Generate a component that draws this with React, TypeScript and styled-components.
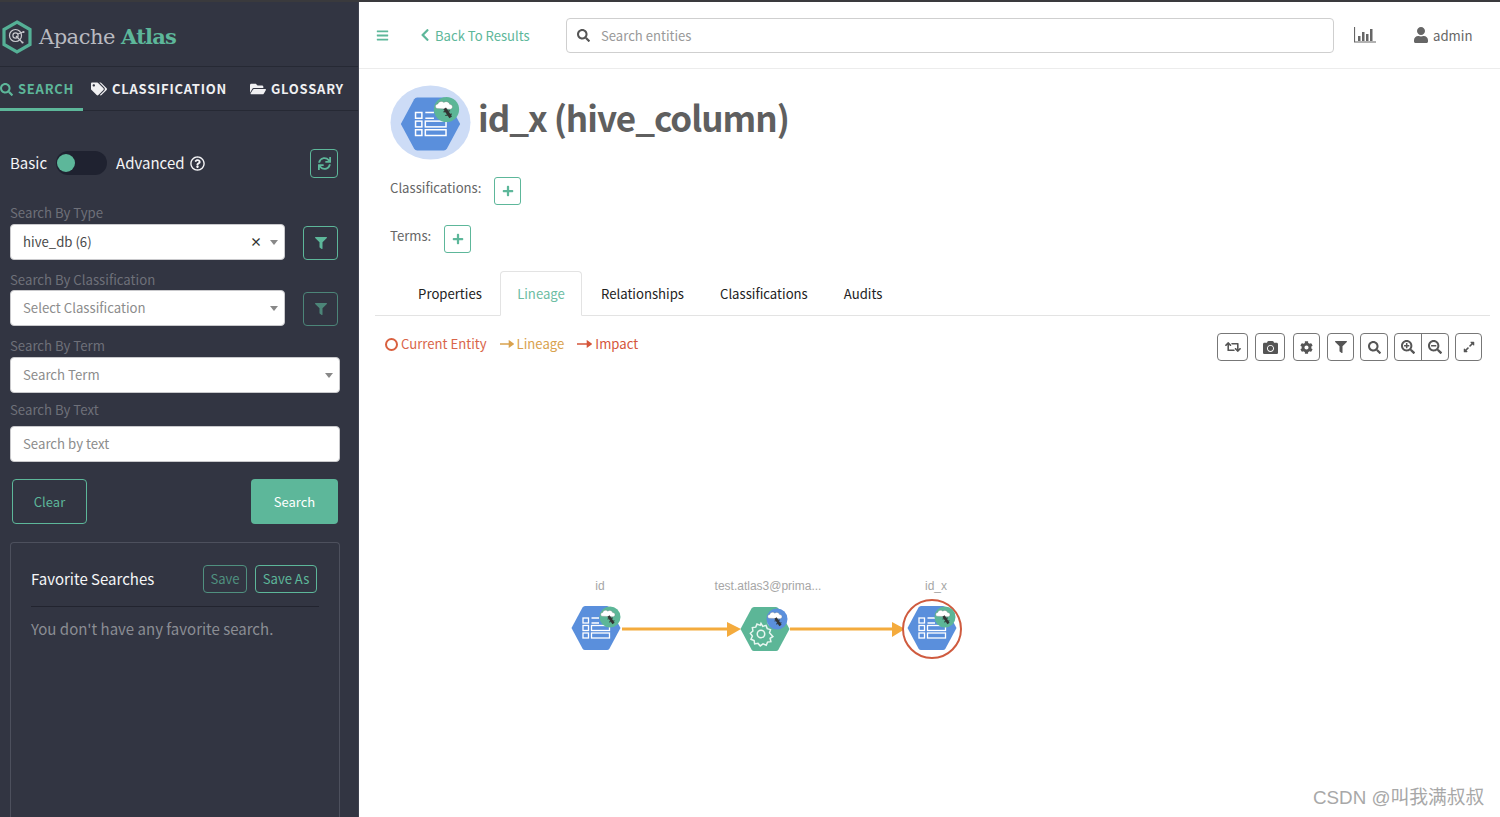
import React from "react";
import styled, { createGlobalStyle } from "styled-components";
import {
  FaBars, FaCamera, FaChevronLeft, FaCog, FaExpandAlt, FaFilter, FaFolderOpen, FaPlus,
  FaRegQuestionCircle, FaRetweet, FaSearch, FaSearchMinus, FaSearchPlus, FaSync, FaTags, FaUser,
} from "react-icons/fa";

const SANS = `"Noto Sans CJK SC", "Noto Sans", sans-serif`;
const TEAL = "#5db79a";

const Global = createGlobalStyle`
  html, body { margin: 0; padding: 0; height: 100%; overflow: hidden; background: #fff; }
  body { font-family: ${SANS}; }
  * { box-sizing: border-box; }
`;

const Page = styled.div`
  position: relative; width: 1500px; height: 817px; display: flex; overflow: hidden;
  border-top: 2px solid #3a3a3d; background: #fff;
`;
const Sidebar = styled.aside`
  width: 359px; flex: none; background: #323542; border-right: 1px solid #3f424f;
  display: flex; flex-direction: column; height: 815px; overflow: hidden;
`;
const Brand = styled.div`
  height: 65px; display: flex; align-items: center; gap: 7px; padding: 5px 0 0 2px;
  border-bottom: 1px solid #262934; flex: none;
`;
const BrandText = styled.div`
  font-family: "DejaVu Serif", serif; font-size: 21px; color: #b9bac0; letter-spacing: -0.5px; white-space: nowrap;
  span { color: ${TEAL}; font-weight: 700; letter-spacing: -0.8px; }
`;
const TabBar = styled.nav`
  height: 44px; display: flex; border-bottom: 1px solid #262934; flex: none;
`;
const SideTab = styled.div<{ $active?: boolean; $w: number; $pl: number }>`
  width: ${(p) => p.$w}px; padding-left: ${(p) => p.$pl}px; height: 44px; display: flex; align-items: center; gap: 5px;
  font-size: 13px; font-weight: 700; letter-spacing: 0.75px; white-space: nowrap; line-height: 18px;
  color: ${(p) => (p.$active ? TEAL : "#f0f0f2")};
  border-bottom: ${(p) => (p.$active ? `3px solid ${TEAL}` : "none")};
  padding-top: ${(p) => (p.$active ? 3 : 0)}px;
  svg { flex: none; }
`;
const SideBody = styled.div`
  padding: 37px 0 0 10px; display: flex; flex-direction: column; flex: 1; min-height: 0;
`;
const ModeRow = styled.div`
  height: 30px; width: 328px; display: flex; align-items: center; color: #f4f4f6; font-size: 15px; line-height: 22px;
`;
const Toggle = styled.div`
  width: 51px; height: 24px; border-radius: 12px; background: #1f2230; margin: 0 9px 0 9px; display: flex; align-items: center; padding-left: 1px;
`;
const Knob = styled.div`
  width: 18px; height: 18px; border-radius: 50%; background: ${TEAL};
`;
const HelpIcon = styled(FaRegQuestionCircle)`
  margin-left: 5px; margin-right: auto;
`;
const IconButton = styled.div<{ $w: number; $h: number; $dim?: boolean; $ml?: number }>`
  width: ${(p) => p.$w}px; height: ${(p) => p.$h}px; flex: none; display: flex; align-items: center; justify-content: center;
  margin-left: ${(p) => p.$ml ?? 0}px; border: 1px solid ${TEAL}; border-radius: 4px; color: ${TEAL};
  opacity: ${(p) => (p.$dim ? 0.62 : 1)};
`;
const Label = styled.div<{ $mt: number }>`
  font-size: 13.2px; line-height: 18px; color: #6e7079; margin-top: ${(p) => p.$mt}px; height: 18px; white-space: nowrap;
`;
const FieldRow = styled.div<{ $mt?: number }>`
  display: flex; align-items: flex-end; margin-top: ${(p) => p.$mt ?? 1}px;
`;
const SelectBox = styled.div<{ $w: number }>`
  position: relative; width: ${(p) => p.$w}px; height: 36px; background: #fff; border-radius: 4px; border: 1px solid #c9c9cc;
  padding-left: 12px; display: flex; align-items: center; font-size: 13.2px; line-height: 20px; color: #4a4a4a; flex: none;
`;
const Placeholder = styled.span`
  color: #8c8c8c;
`;
const Caret = styled.i`
  position: absolute; right: 6px; top: 15px; width: 0; height: 0;
  border-left: 4px solid transparent; border-right: 4px solid transparent; border-top: 5px solid #888;
`;
const Clear = styled.b`
  position: absolute; right: 22px; top: 7px; font-size: 12px; line-height: 20px; color: #333;
`;
const Actions = styled.div`
  display: flex; justify-content: space-between; width: 326px; margin: 17px 0 0 2px;
`;
const OutlineBtn = styled.div`
  width: 75px; height: 45px; border: 1px solid ${TEAL}; border-radius: 4px; color: ${TEAL};
  display: flex; align-items: center; justify-content: center; font-size: 13px;
`;
const SolidBtn = styled.div`
  width: 87px; height: 45px; border-radius: 4px; background: ${TEAL}; color: #fff;
  display: flex; align-items: center; justify-content: center; font-size: 13px;
`;
const FavPanel = styled.section`
  width: 330px; flex: 1; margin-top: 18px; border: 1px solid #4d505d; border-bottom: none; border-radius: 4px 4px 0 0; padding: 22px 20px 0 20px;
`;
const FavHead = styled.div`
  display: flex; align-items: center; height: 42px; padding-bottom: 14px; border-bottom: 1px solid #22242f;
`;
const FavTitle = styled.div`
  flex: 1; color: #f5f5f7; font-size: 15px; line-height: 22px; white-space: nowrap;
`;
const SmallBtn = styled.div<{ $w: number; $dim?: boolean; $mr: number }>`
  width: ${(p) => p.$w}px; height: 28px; margin-right: ${(p) => p.$mr}px; border: 1px solid ${TEAL}; border-radius: 4px; color: ${TEAL};
  display: flex; align-items: center; justify-content: center; font-size: 13.1px; white-space: nowrap;
  opacity: ${(p) => (p.$dim ? 0.7 : 1)};
`;
const FavEmpty = styled.div`
  margin-top: 11px; color: #8b8d94; font-size: 15px; line-height: 22px; white-space: nowrap;
`;

const Main = styled.main`
  flex: 1; display: flex; flex-direction: column; min-width: 0;
`;
const TopBar = styled.header`
  height: 67px; flex: none; display: flex; align-items: center; border-bottom: 1px solid #ececec; padding: 0 0 0 17px;
`;
const Burger = styled(FaBars)`
  color: ${TEAL}; flex: none;
`;
const BackLink = styled.div`
  margin-left: 29px; width: 148px; display: flex; align-items: center; gap: 3px; color: ${TEAL}; font-size: 13.1px; white-space: nowrap; flex: none;
`;
const SearchBar = styled.div`
  width: 768px; height: 35px; margin-top: 1px; border: 1px solid #cfcfcf; border-radius: 4px; display: flex; align-items: center; padding-left: 10px; gap: 11px;
  color: #999; font-size: 13.1px; flex: none;
`;
const DarkSearch = styled(FaSearch)`
  color: #555;
`;
const ChartIcon = styled.svg`
  margin-left: 20px; flex: none;
`;
const UserBox = styled.div`
  margin-left: 37px; display: flex; align-items: center; gap: 4px; color: #666; font-size: 13.2px; white-space: nowrap;
`;
const Content = styled.div`
  flex: 1; display: flex; flex-direction: column; padding: 16px 10px 0 16px; min-height: 0;
`;
const TitleRow = styled.div`
  display: flex; align-items: center; margin-left: 15px; height: 75px;
`;
const Title = styled.h1`
  margin: 0 0 6px 7px; font-size: 35px; line-height: 50px; font-weight: 600; color: #5f5f5f; white-space: nowrap; letter-spacing: -1px;
  transform: translateY(-3px);
`;
const MetaRow = styled.div<{ $mt: number }>`
  display: flex; align-items: center; gap: 13px; margin: ${(p) => p.$mt}px 0 0 15px; height: 28px; color: #666; font-size: 13.15px; line-height: 20px;
  span { margin-top: -6px; }
`;
const PlusBtn = styled.div`
  width: 27px; height: 28px; border: 1px solid ${TEAL}; border-radius: 3px; color: ${TEAL}; display: flex; align-items: center; justify-content: center;
`;
const TabStrip = styled.div`
  display: flex; height: 45px; margin-top: 18px; border-bottom: 1px solid #e3e3e3; padding-left: 126px; width: 1115px; flex: none; align-items: stretch;
`;
const MainTab = styled.div<{ $active?: boolean; $ml: number; $w?: number }>`
  position: relative; font-size: 13.15px; line-height: 20px; white-space: nowrap; margin-left: ${(p) => p.$ml}px;
  ${(p) => (p.$w ? `width:${p.$w}px;` : "")}
  color: ${(p) => (p.$active ? "#6dbda3" : "#222")}; display: flex; align-items: center; justify-content: center; padding-top: 1px;
  ${(p) => p.$active && `border: 1px solid #e3e3e3; border-bottom: 1px solid #fff; border-radius: 4px 4px 0 0; height: 45px;`}
`;
const FirstTab = styled(MainTab)`
  margin-left: -83px;
`;
const LegendBar = styled.div`
  display: flex; justify-content: space-between; align-items: flex-start; margin-top: 17px; height: 28px; padding: 0 8px 0 10px; flex: none;
`;
const Legend = styled.div`
  display: flex; align-items: center; font-size: 13.15px; line-height: 22px; height: 22px; white-space: nowrap;
`;
const LegendItem = styled.div<{ $c: string; $ml?: number }>`
  display: flex; align-items: center; gap: 3px; color: ${(p) => p.$c}; margin-left: ${(p) => p.$ml ?? 0}px;
`;
const Ring = styled.i`
  width: 13px; height: 13px; border: 2px solid #d9603f; border-radius: 50%; display: block;
`;
const Tools = styled.div`
  display: flex; align-items: center;
`;
const Tool = styled.div<{ $w: number; $ml: number }>`
  width: ${(p) => p.$w}px; height: 28px; margin-left: ${(p) => p.$ml}px; border: 1px solid #777; border-radius: 4px; color: #555;
  display: flex; align-items: center; justify-content: center;
`;
const ToolGroup = styled.div`
  display: flex; height: 28px; width: 55px; margin-left: 6px; border: 1px solid #777; border-radius: 4px; color: #555;
`;
const ToolPart = styled.div<{ $sep?: boolean }>`
  flex: 1; display: flex; align-items: center; justify-content: center; border-left: ${(p) => (p.$sep ? "1px solid #777" : "none")};
`;
const Canvas = styled.div`
  position: relative; flex: 1; min-height: 0;
`;
const GraphSvg = styled.svg`
  position: absolute; left: 0; top: 0; overflow: visible;
`;
const GraphLabel = styled.text`
  font-family: "Liberation Sans", sans-serif; font-size: 12px; fill: #a6a6a6; text-anchor: middle;
`;
const Watermark = styled.div`
  position: absolute; left: 1313px; top: 783px; font-family: "Liberation Sans", "Noto Sans CJK SC", sans-serif; font-size: 18.8px; line-height: 26px; color: #a8a8a8; white-space: nowrap;
`;

const Bee: React.FC = () => (
  <g>
    <path d="M-8 -.8c-1.8-.8-1.6-3.6.8-3.8.5-2.2 3.6-2.8 5-1.2 1.4-1.4 4.4-.8 4.8 1.4 2.4 0 3.6 3.4.7 4.2z" fill="#fff" stroke="#777" strokeWidth=".3" />
    <path d="M-1.5 -1L3.5 6.5" stroke="#333" strokeWidth="2.6" />
    <path d="M-2.5 2L3 1M-1 5L4.5 3.8" stroke="#333" strokeWidth=".9" />
  </g>
);
const Hex: React.FC<{ fill: string; s?: number }> = ({ fill, s = 1 }) => (
  <path
    transform={`scale(${s})`}
    d="M-24.5 0L-13.5 -20.5Q-12.6 -22 -11 -22H11Q12.6 -22 13.5 -20.5L24.5 0L13.5 20.5Q12.6 22 11 22H-11Q-12.6 22 -13.5 20.5Z"
    fill={fill}
  />
);
const ListGlyph: React.FC<{ s?: number }> = ({ s = 1 }) => (
  <g transform={`scale(${s})`} fill="none" stroke="#fff" strokeWidth="1.3">
    <rect x="-13" y="-10" width="5.5" height="5" />
    <rect x="-13" y="-2.5" width="5.5" height="5" />
    <rect x="-13" y="5" width="5.5" height="5" />
    <path d="M-4.5 -10H3M-4.5 -5H3" />
    <rect x="-4.5" y="-2.5" width="18" height="5" />
    <rect x="-4.5" y="5" width="18" height="5" />
  </g>
);
const GearGlyph: React.FC = () => (
  <g fill="none" stroke="#e8f6f0" strokeWidth="1.2" transform="translate(-4 5) scale(1.25) translate(3.5 -5)">
    <circle cx="-3.5" cy="5" r="3" />
    <path d="M-3.5 -3.5l1.4 2.4 2.6-.8 1 2.6 2.6.8-.8 2.6L6 7l-2.2 1.4.6 2.7-2.7.4-1 2.5-2.6-1.1-2.2 1.6-1.8-2-2.7.4-.4-2.7-2.5-1 1.1-2.6-1.6-2.2 2-1.8-.4-2.7 2.7-.4 1-2.5 2.6 1.1z" />
    <path d="M5 -1.5a3.2 3.2 0 1 1 2.5 -5.5" />
  </g>
);

const GraphNode: React.FC<{ x: number; y: number; color: string; badge: string; glyph: React.ReactNode; bx: number; by: number }> = ({ x, y, color, badge, glyph, bx, by }) => (
  <g transform={`translate(${x} ${y})`}>
    <Hex fill={color} />
    {glyph}
    <g transform={`translate(${bx} ${by})`}>
      <circle r="10.5" fill={badge} />
      <Bee />
    </g>
  </g>
);

const Logo: React.FC = () => (
  <svg width="30" height="34" viewBox="0 0 30 34">
    <path d="M15 2L28 9.5V24.5L15 32L2 24.5V9.5Z" fill="none" stroke="#55b096" strokeWidth="3.2" />
    <circle cx="13.5" cy="15.5" r="6" fill="none" stroke="#c9cacf" strokeWidth="1.2" />
    <circle cx="13.5" cy="15.5" r="2.6" fill="none" stroke="#c9cacf" strokeWidth="1.2" />
    <path d="M14 16l6 6M16 14l5-2" stroke="#c9cacf" strokeWidth="1.2" />
    <circle cx="21.5" cy="12" r="1.1" fill="#c9cacf" />
    <circle cx="20.5" cy="22.5" r="1.1" fill="#c9cacf" />
  </svg>
);

export default function App() {
  return (
    <Page>
      <Global />
      <Sidebar>
        <Brand>
          <Logo />
          <BrandText>Apache <span>Atlas</span></BrandText>
        </Brand>
        <TabBar>
          <SideTab $active $w={83} $pl={0}><FaSearch size={13} />SEARCH</SideTab>
          <SideTab $w={167} $pl={8}><FaTags size={16} />CLASSIFICATION</SideTab>
          <SideTab $w={108} $pl={0}><FaFolderOpen size={16} />GLOSSARY</SideTab>
        </TabBar>
        <SideBody>
          <ModeRow>
            Basic
            <Toggle><Knob /></Toggle>
            Advanced
            <HelpIcon size={15} />
            <IconButton $w={28} $h={29}><FaSync size={13} /></IconButton>
          </ModeRow>
          <Label $mt={26}>Search By Type</Label>
          <FieldRow $mt={2}>
            <SelectBox $w={275}>hive_db (6)<Clear>×</Clear><Caret /></SelectBox>
            <IconButton $w={35} $h={34} $ml={18}><FaFilter size={12} /></IconButton>
          </FieldRow>
          <Label $mt={11}>Search By Classification</Label>
          <FieldRow>
            <SelectBox $w={275}><Placeholder>Select Classification</Placeholder><Caret /></SelectBox>
            <IconButton $w={35} $h={34} $ml={18} $dim><FaFilter size={12} /></IconButton>
          </FieldRow>
          <Label $mt={11}>Search By Term</Label>
          <FieldRow $mt={2}>
            <SelectBox $w={330}><Placeholder>Search Term</Placeholder><Caret /></SelectBox>
          </FieldRow>
          <Label $mt={8}>Search By Text</Label>
          <FieldRow $mt={7}>
            <SelectBox $w={330}><Placeholder>Search by text</Placeholder></SelectBox>
          </FieldRow>
          <Actions>
            <OutlineBtn>Clear</OutlineBtn>
            <SolidBtn>Search</SolidBtn>
          </Actions>
          <FavPanel>
            <FavHead>
              <FavTitle>Favorite Searches</FavTitle>
              <SmallBtn $w={44} $mr={8} $dim>Save</SmallBtn>
              <SmallBtn $w={62} $mr={2}>Save As</SmallBtn>
            </FavHead>
            <FavEmpty>You don't have any favorite search.</FavEmpty>
          </FavPanel>
        </SideBody>
      </Sidebar>
      <Main>
        <TopBar>
          <Burger size={13} />
          <BackLink><FaChevronLeft size={14} />Back To Results</BackLink>
          <SearchBar><DarkSearch size={13} />Search entities</SearchBar>
          <ChartIcon width="22" height="16" viewBox="0 0 22 16">
            <path d="M.5 0V15H22" fill="none" stroke="#666" strokeWidth="1.2" />
            <path d="M4 9h2.5v5H4zM8 5h2.5v9H8zM12 7h2.5v7H12zM16 2h2.5v12H16z" fill="#666" />
          </ChartIcon>
          <UserBox><FaUser size={16} />admin</UserBox>
        </TopBar>
        <Content>
          <TitleRow>
            <svg width="81" height="75" viewBox="0 0 81 75">
              <ellipse cx="40.5" cy="37.5" rx="40" ry="37" fill="#cddcf6" />
              <g transform="translate(40.5 39)">
                <Hex fill="#5a8fdc" s={1.21} />
                <ListGlyph s={1.15} />
                <g transform="translate(16 -14.5) scale(1.2)">
                  <circle r="10.5" fill="#5cb697" />
                  <Bee />
                </g>
              </g>
            </svg>
            <Title>id_x (hive_column)</Title>
          </TitleRow>
          <MetaRow $mt={17}><span>Classifications:</span><PlusBtn><FaPlus size={12} /></PlusBtn></MetaRow>
          <MetaRow $mt={20}><span>Terms:</span><PlusBtn><FaPlus size={12} /></PlusBtn></MetaRow>
          <TabStrip>
            <FirstTab $ml={0} $w={64}>Properties</FirstTab>
            <MainTab $active $ml={18} $w={82}>Lineage</MainTab>
            <MainTab $ml={19}>Relationships</MainTab>
            <MainTab $ml={36}>Classifications</MainTab>
            <MainTab $ml={36}>Audits</MainTab>
          </TabStrip>
          <LegendBar>
            <Legend>
              <LegendItem $c="#d9654a"><Ring />Current Entity</LegendItem>
              <LegendItem $c="#d9a24e" $ml={13}>
                <svg width="14" height="8" viewBox="0 0 14 8"><path d="M0 4H12M9.5 1.5L13 4L9.5 6.5Z" stroke="#d9a24e" strokeWidth="1.6" fill="#d9a24e" /></svg>
                Lineage
              </LegendItem>
              <LegendItem $c="#d5553a" $ml={13}>
                <svg width="15" height="8" viewBox="0 0 15 8"><path d="M0 4H13M10.5 1.5L14 4L10.5 6.5Z" stroke="#d5553a" strokeWidth="1.6" fill="#d5553a" /></svg>
                Impact
              </LegendItem>
            </Legend>
            <Tools>
              <Tool $w={31} $ml={0}><FaRetweet size={16} /></Tool>
              <Tool $w={30} $ml={7}><FaCamera size={15} /></Tool>
              <Tool $w={27} $ml={8}><FaCog size={13} /></Tool>
              <Tool $w={27} $ml={7}><FaFilter size={12} /></Tool>
              <Tool $w={28} $ml={6}><FaSearch size={13} /></Tool>
              <ToolGroup>
                <ToolPart><FaSearchPlus size={14} /></ToolPart>
                <ToolPart $sep><FaSearchMinus size={14} /></ToolPart>
              </ToolGroup>
              <Tool $w={27} $ml={6}><FaExpandAlt size={12} /></Tool>
            </Tools>
          </LegendBar>
          <Canvas>
            <GraphSvg width="700" height="320">
              {/* origin: page x 375, page y 361 */}
              <g transform="translate(-375 -361)">
                <GraphLabel x="600" y="590">id</GraphLabel>
                <GraphLabel x="768" y="590">test.atlas3@prima...</GraphLabel>
                <GraphLabel x="936" y="590">id_x</GraphLabel>
                <path d="M622 629H728" stroke="#f4ab3d" strokeWidth="3" />
                <path d="M727 622L741 629L727 637Z" fill="#f4ab3d" />
                <path d="M790 629H893" stroke="#f4ab3d" strokeWidth="3" />
                <path d="M892 622L905 629L892 637Z" fill="#f4ab3d" />
                <GraphNode x={596} y={628} color="#5a8fdc" badge="#5cb697" glyph={<ListGlyph />} bx={14} by={-11} />
                <GraphNode x={765} y={629} color="#5cb697" badge="#5a8fdc" glyph={<GearGlyph />} bx={12} by={-10} />
                <circle cx="932" cy="629" r="29" fill="#fff" stroke="#cf5b3f" strokeWidth="2" />
                <GraphNode x={932} y={628} color="#5a8fdc" badge="#5cb697" glyph={<ListGlyph />} bx={13} by={-11} />
              </g>
            </GraphSvg>
          </Canvas>
        </Content>
      </Main>
      <Watermark>CSDN @叫我满叔叔</Watermark>
    </Page>
  );
}
